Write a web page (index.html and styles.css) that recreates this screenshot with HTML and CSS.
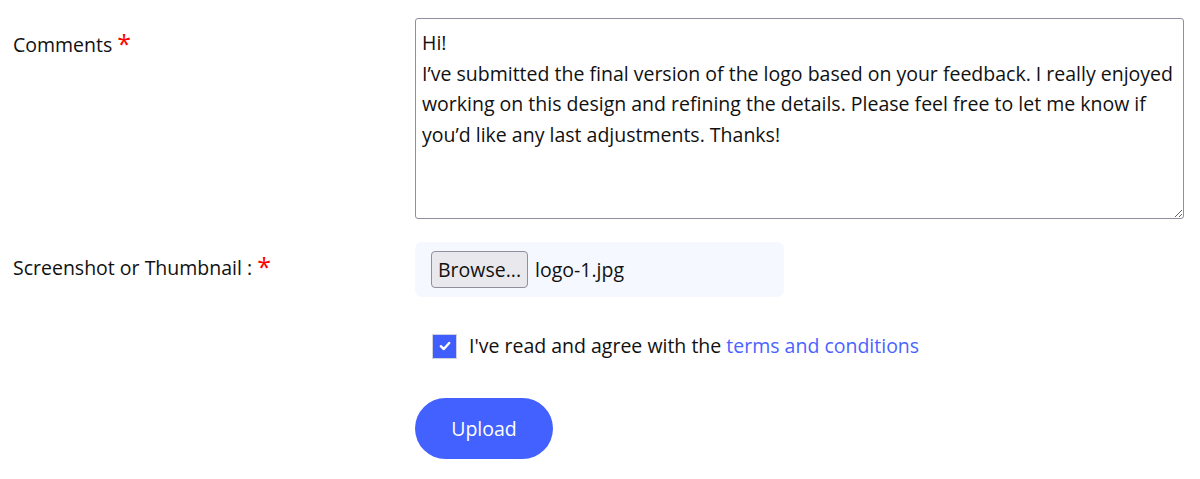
FILE: index.html
```html
<!DOCTYPE html>
<html>
<head>
    <meta charset="UTF-8">
    <title>Upload</title>
    <link rel="stylesheet" href="styles.css">
</head>
<body>
    <form class="upload-form">
        <div class="row">
            <label class="label label-top">Comments <span class="req">*</span></label>
            <div class="field">
                <textarea class="comments">Hi!
I’ve submitted the final version of the logo based on your feedback. I really enjoyed working on this design and refining the details. Please feel free to let me know if you’d like any last adjustments. Thanks!</textarea>
            </div>
        </div>
        <div class="row">
            <label class="label label-file">Screenshot or Thumbnail : <span class="req">*</span></label>
            <div class="field">
                <div class="file-box">
                    <span class="browse">Browse...</span>
                    <span class="file-name">logo-1.jpg</span>
                </div>
            </div>
        </div>
        <div class="row">
            <div class="label"></div>
            <div class="field">
                <label class="agree">
                    <span class="check">
                        <svg width="14" height="14" viewBox="0 0 14 14"><path d="M2.8 7.2 L5.8 10 L11.2 4" fill="none" stroke="#fff" stroke-width="2.4" stroke-linecap="round" stroke-linejoin="round"/></svg>
                    </span>
                    <span>I've read and agree with the <a href="#">terms and conditions</a></span>
                </label>
            </div>
        </div>
        <div class="row">
            <div class="label"></div>
            <div class="field">
                <button type="button" class="upload-btn">Upload</button>
            </div>
        </div>
    </form>
</body>
</html>
```

FILE: styles.css
```css
body {
    margin: 0;
    background: #fff;
    font-family: "Open Sans", "Noto Sans", sans-serif;
    font-size: 19.5px;
    color: #111;
}
.upload-form {
    padding: 18px 16px 0 13px;
}
.row {
    display: grid;
    grid-template-columns: 402px 769px;
}
.label {
    line-height: 30px;
}
.label-top {
    padding-top: 12px;
}
.label-file {
    padding-top: 11px;
}
.req {
    color: #f00;
    font-size: 25px;
    vertical-align: top;
    line-height: 26px;
}
.comments {
    display: block;
    box-sizing: border-box;
    width: 769px;
    height: 201px;
    margin: 0 0 23px;
    padding: 9px 6px;
    border: 1px solid #8f8f9d;
    border-radius: 3px;
    font-family: inherit;
    font-size: 19.5px;
    line-height: 30.6px;
    color: #111;
    resize: vertical;
}
.file-box {
    display: flex;
    align-items: center;
    gap: 7px;
    width: 369px;
    height: 55px;
    box-sizing: border-box;
    padding: 0 16px;
    background: #f5f8ff;
    border-radius: 7px;
}
.browse {
    box-sizing: border-box;
    height: 37px;
    line-height: 35px;
    padding: 0 6px;
    border: 1px solid #8f8f9d;
    border-radius: 4px;
    background: #e9e9ed;
}
.agree {
    display: flex;
    align-items: center;
    gap: 12px;
    margin: 34px 0 0 17px;
    line-height: 30px;
}
.check {
    display: flex;
    align-items: center;
    justify-content: center;
    width: 25px;
    height: 25px;
    box-sizing: border-box;
    border: 1px solid #cfd3e0;
    background: #3f5efb;
}
.agree a {
    color: #4a63ff;
    text-decoration: none;
}
.upload-btn {
    margin-top: 37px;
    width: 138px;
    height: 61px;
    border: none;
    border-radius: 31px;
    background: #4361ff;
    color: #fff;
    font-family: inherit;
    font-size: 19.5px;
}
```
